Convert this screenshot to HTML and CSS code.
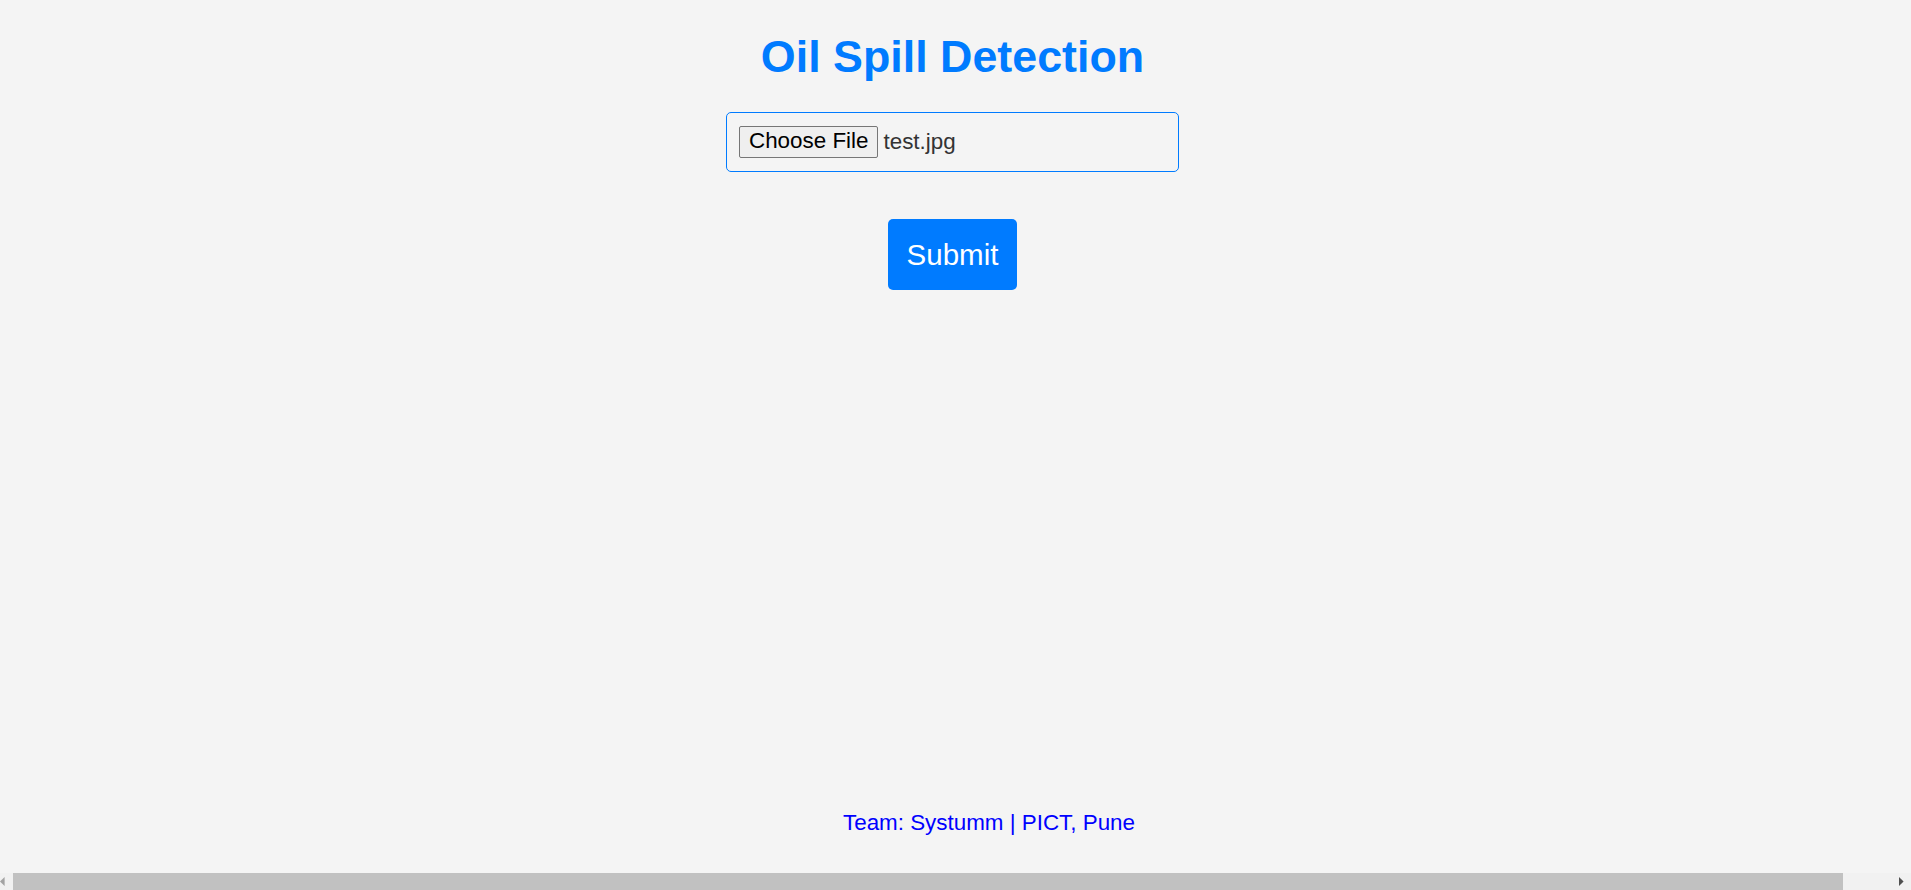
FILE: index.html
```html
<!DOCTYPE html>
<html lang="en">
<head>
<meta charset="utf-8">
<title>Oil Spill Detection</title>
<link rel="stylesheet" href="styles.css">
</head>
<body>
<div class="page">
  <main class="main">
    <h1 class="title">Oil Spill Detection</h1>
    <form class="upload-form" onsubmit="return false;">
      <div class="file-box">
        <button type="button" class="file-btn">Choose File</button><span class="file-name">test.jpg</span>
      </div>
      <button type="submit" class="submit-btn">Submit</button>
    </form>
  </main>
  <footer class="footer">Team: Systumm | PICT, Pune</footer>
</div>
<div class="hscroll">
  <div class="sb-btn sb-left">
    <svg width="13" height="17" viewBox="0 0 13 17"><polygon points="0,8.5 4.6,4 4.6,13" fill="#a3a3a3"/></svg>
  </div>
  <div class="sb-thumb"></div>
  <div class="sb-track"></div>
  <div class="sb-btn sb-right">
    <svg width="17" height="17" viewBox="0 0 17 17"><polygon points="9.6,8.5 5,4 5,13" fill="#505050"/></svg>
  </div>
</div>
</body>
</html>
```

FILE: styles.css
```css
html, body {
  margin: 0;
  padding: 0;
}

body {
  background: #f4f4f4;
  font-family: "Liberation Sans", Arial, sans-serif;
  height: 100vh;
  display: flex;
  flex-direction: column;
  overflow: hidden;
}

.page {
  flex: 1;
  display: flex;
  flex-direction: column;
  min-height: 0;
}

.main {
  display: flex;
  flex-direction: column;
  align-items: center;
  padding-right: 6px;
}

.title {
  margin: 31px 0 0;
  font-size: 44.8px;
  line-height: 50px;
  font-weight: bold;
  color: #007bff;
}

.upload-form {
  display: flex;
  flex-direction: column;
  align-items: center;
  margin-top: 31px;
}

.file-box {
  box-sizing: border-box;
  width: 453px;
  height: 60px;
  padding: 13px 12px 13px;
  border: 1px solid #007bff;
  border-radius: 5px;
  display: flex;
  align-items: center;
}

.file-btn {
  font-family: "Liberation Sans", Arial, sans-serif;
  font-size: 22.4px;
  line-height: 26px;
  padding: 1px 9px 3px;
  margin: 0;
  background: #efefef;
  color: #000;
  border: 1px solid #767676;
  border-radius: 2px;
  height: 32px;
  box-sizing: border-box;
}

.file-name {
  margin-left: 5px;
  font-size: 22.4px;
  line-height: 26px;
  color: #333;
}

.submit-btn {
  margin-top: 47px;
  font-family: "Liberation Sans", Arial, sans-serif;
  font-size: 29.5px;
  line-height: 33px;
  padding: 19px 19px;
  background: #007bff;
  color: #fff;
  border: none;
  border-radius: 5px;
}

.footer {
  margin-top: auto;
  padding: 0 0 38px 67px;
  text-align: center;
  font-size: 22.4px;
  line-height: 25px;
  color: #0000ff;
}

.hscroll {
  flex: 0 0 17px;
  height: 17px;
  display: flex;
  background: #f1f1f1;
}

.sb-btn {
  display: flex;
}

.sb-left {
  width: 13px;
}

.sb-right {
  width: 17px;
}

.sb-thumb {
  width: 1830px;
  background: #c1c1c1;
}

.sb-track {
  flex: 1;
}
```
